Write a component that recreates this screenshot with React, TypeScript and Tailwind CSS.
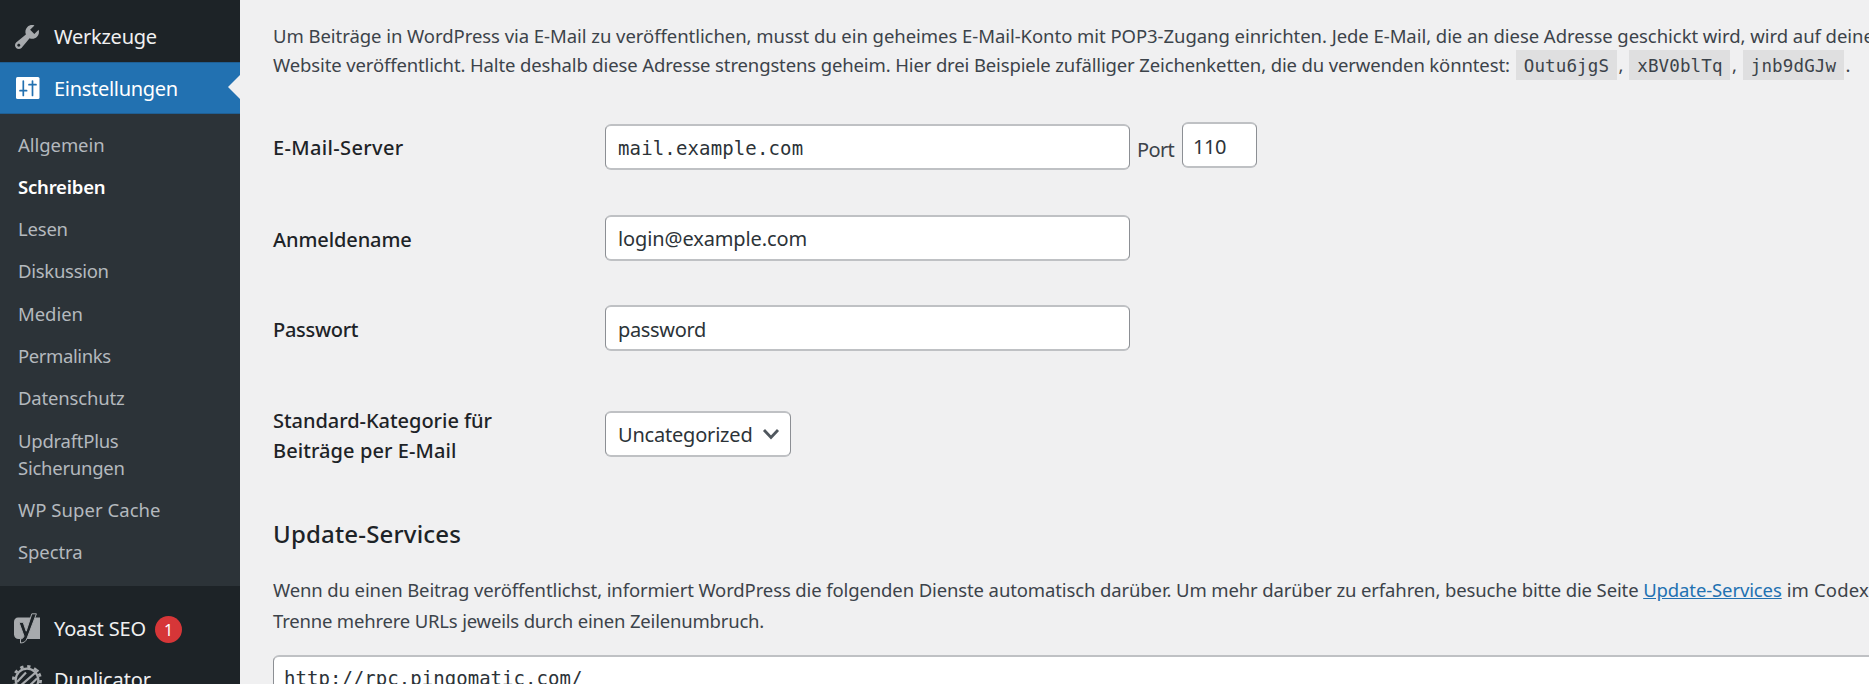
import React, { useState } from 'react';

const SUBMENU_ITEMS = [
  { label: 'Allgemein', tracking: 'tracking-[-0.06px]' },
  { label: 'Schreiben', tracking: 'tracking-[-0.2px]' },
  { label: 'Lesen', tracking: 'tracking-[-0.2px]' },
  { label: 'Diskussion', tracking: 'tracking-[-0.28px]' },
  { label: 'Medien', tracking: 'tracking-[-0.05px]' },
  { label: 'Permalinks', tracking: 'tracking-[-0.4px]' },
  { label: 'Datenschutz', tracking: 'tracking-[-0.17px]' },
  { label: 'UpdraftPlus Sicherungen', tracking: 'tracking-[-0.25px]' },
  { label: 'WP Super Cache', tracking: 'tracking-[0.05px]' },
  { label: 'Spectra', tracking: 'tracking-[-0.1px]' },
];

const FIELD = "h-[46px] rounded-[6px] border-x border-y-2 border-x-[#8c8f94] border-y-[#bfc1c4] bg-white text-[#2c3338] outline-none";

const ToolsIcon = () => (
  <svg className="ml-[12px] w-[30px] h-[30px] shrink-0" viewBox="0 0 20 20" fill="#a7aaad">
    <path d="M16.68 9.77c-1.34 1.34-3.3 1.67-4.95.99l-5.41 6.52c-.99.99-2.59.99-3.58 0s-.99-2.59 0-3.57l6.52-5.42c-.68-1.65-.35-3.61.99-4.95 1.28-1.28 3.12-1.62 4.72-1.06l-2.89 2.89 2.82 2.82 2.86-2.87c.53 1.58.18 3.39-1.08 4.65zM3.81 16.21c.4.39 1.04.39 1.43 0 .4-.4.4-1.04 0-1.43-.39-.4-1.03-.4-1.43 0-.39.39-.39 1.03 0 1.43z" />
  </svg>
);

const SettingsIcon = () => (
  <svg className="ml-[13px] mb-px w-[30px] h-[30px] shrink-0" viewBox="0 0 30 30" fill="none">
    <rect x="3" y="4" width="23.5" height="22" rx="1.5" fill="#fff" />
    <path d="M10.3 8v14.5M7 17.7h6.6M19.5 8v14.5M16 11.7h7" stroke="#2271b1" strokeWidth="1.7" strokeLinecap="round" />
  </svg>
);

const YoastIcon = () => (
  <svg className="ml-[12px] w-[30px] h-[34px] shrink-0" viewBox="0 0 30 34">
    <path d="M6 5.500h22V27H6.500C4 27 2 25 2 22.500V9.500c0-2.200 1.800-4 4-4z" fill="#a7aaad" />
    <path d="M19.800 1.800h4.600L15.200 26c-1.300 3.400-3 4.900-6.700 5v-4c2.300-.3 3-1.500 3.500-2.900l-5-13.800h4.200l3 8.900z" fill="#1d2327" stroke="#a7aaad" strokeWidth="1" />
  </svg>
);

const DuplicatorIcon = () => (
  <svg className="ml-[11px] w-[32px] h-[32px] shrink-0" viewBox="0 0 32 32" fill="none" stroke="#a7aaad">
    <circle cx="16" cy="16" r="13.600" strokeWidth="2.800" strokeDasharray="3.300 3.800" />
    <circle cx="16" cy="16" r="11.300" strokeWidth="2.200" />
    <path d="M6 18L15 8.500M8.500 22.500L27.500 6M14 26L26 14.500" strokeWidth="2.200" />
  </svg>
);

interface MenuRowProps {
  icon: React.ReactNode;
  label: string;
  className?: string;
  children?: React.ReactNode;
}

const MenuRow = ({ icon, label, className = '', children }: MenuRowProps) => (
  <a href="#" className={`flex items-center text-[20px] ${className}`}>
    <span className="flex w-[54px] shrink-0 items-center">{icon}</span>
    <span>{label}</span>
    {children}
  </a>
);

const Sidebar = () => {
  const [current, setCurrent] = useState('Schreiben');

  return (
    <nav className="w-[240px] shrink-0 bg-[#1d2327] pt-[11px] text-[#f0f0f1]">
      <MenuRow icon={<ToolsIcon />} label="Werkzeuge" className="h-[51px] tracking-[-0.24px]" />
      <div className="relative border-y border-[#1f5f94] bg-[#2271b1] text-white">
        <MenuRow icon={<SettingsIcon />} label="Einstellungen" className="h-[50px] pt-px tracking-[-0.3px]" />
        {/* Arrow pointing at the active page */}
        <span className="absolute right-0 top-[12px] h-0 w-0 border-y-[12px] border-r-[12px] border-y-transparent border-r-[#f0f0f1]"></span>
      </div>
      <ul className="bg-[#2c3338] pb-[13px] pt-[9px]">
        {SUBMENU_ITEMS.map((item) => (
          <li key={item.label} className="py-[7.5px] pl-[18px] pr-[60px] text-[18.5px] leading-[27.3px]">
            <a
              href="#"
              onClick={() => setCurrent(item.label)}
              className={`${item.tracking} ${item.label === current ? 'font-semibold text-white' : 'text-[#b4b9be]'}`}
            >
              {item.label}
            </a>
          </li>
        ))}
      </ul>
      <div className="pt-[17px]">
        <MenuRow icon={<YoastIcon />} label="Yoast SEO" className="h-[51px] tracking-[-0.16px]">
          <span className="ml-[9px] mt-[2px] flex h-[27px] w-[27px] items-center justify-center rounded-full bg-[#d63638] text-[16px] text-white">1</span>
        </MenuRow>
        <MenuRow icon={<DuplicatorIcon />} label="Duplicator" className="h-[51px] tracking-[-0.1px]" />
      </div>
    </nav>
  );
};

const Code = ({ children }: { children: React.ReactNode }) => (
  <code className="mx-[1.5px] inline-block h-[30px] w-[101px] bg-[#dfdfe0] text-center align-top font-['DejaVu_Sans_Mono',monospace] text-[17.5px] leading-[32px] tracking-[0.14px]">
    {children}
  </code>
);

const Label = ({ children, className = '' }: { children: React.ReactNode; className?: string }) => (
  <label className={`block w-[332px] shrink-0 text-[20px] font-medium leading-[30px] text-[#1d2327] ${className}`}>{children}</label>
);

const App = () => {
  return (
    <div className="h-[693px] overflow-hidden bg-white">
      <div className="flex h-[684px] overflow-hidden bg-[#f0f0f1] font-['Noto_Sans','Open_Sans',sans-serif] text-[#3c434a]">
        <Sidebar />

        <main className="w-[1629px] shrink-0 overflow-hidden pl-[33px] pt-[21px]">
          <div className="h-[58px] whitespace-nowrap text-[18.5px] leading-[29px]">
            <p className="tracking-[-0.05px]">
              Um Beiträge in WordPress via E-Mail zu veröffentlichen, musst du ein geheimes E-Mail-Konto mit POP3-Zugang einrichten. Jede E-Mail, die an diese Adresse geschickt wird, wird auf deine
            </p>
            <p className="tracking-[-0.13px]">
              Website veröffentlicht. Halte deshalb diese Adresse strengstens geheim. Hier drei Beispiele zufälliger Zeichenketten, die du verwenden könntest: <Code>Outu6jgS</Code>, <Code>xBV0blTq</Code>, <Code>jnb9dGJw</Code>.
            </p>
          </div>

          <form onSubmit={(e) => e.preventDefault()}>
            <div className="mt-[43px] flex h-[93px] items-start">
              <Label className="mt-[11px] tracking-[0.35px]">E-Mail-Server</Label>
              <input type="text" defaultValue="mail.example.com" className={`${FIELD} mt-[2px] w-[525px] pl-[12px] pt-[2px] font-['DejaVu_Sans_Mono',monospace] text-[19px] tracking-[0.14px]`} />
              <span className="ml-[7px] mt-[13px] w-[45px] text-[20px] leading-[30px] tracking-[-0.65px]">Port</span>
              <input type="text" defaultValue="110" className={`${FIELD} w-[75px] pl-[10px] pt-[2px] text-[20px] tracking-[-0.44px]`} />
            </div>

            <div className="flex h-[90px] items-start">
              <Label className="mt-[10px] tracking-[-0.1px]">Anmeldename</Label>
              <input type="text" defaultValue="login@example.com" className={`${FIELD} w-[525px] pl-[12px] text-[20px] tracking-[-0.11px]`} />
            </div>

            <div className="flex h-[101px] items-start">
              <Label className="mt-[10px] tracking-[-0.3px]">Passwort</Label>
              <input type="text" defaultValue="password" className={`${FIELD} w-[525px] pl-[12px] pt-[2px] text-[20px] tracking-[-0.33px]`} />
            </div>

            <div className="flex h-[110px] items-start">
              <Label>
                <span className="tracking-[-0.04px]">Standard-Kategorie für</span>
                <br />
                <span className="tracking-[0.08px]">Beiträge per E-Mail</span>
              </Label>
              <button type="button" className={`${FIELD} mt-[5px] flex w-[186px] items-center pl-[12px] pt-[2px] text-[20px] tracking-[-0.2px]`}>
                Uncategorized
                <svg className="mb-[2px] ml-[9px] h-[12px] w-[18px]" viewBox="0 0 18 12" fill="none" stroke="#50575e" strokeWidth="2.800">
                  <path d="M2 2l7 7.500L16 2" />
                </svg>
              </button>
            </div>

            <h2 className="text-[24px] font-medium leading-[36px] tracking-[0.18px] text-[#1d2327]">Update-Services</h2>

            <div className="mt-[22px] whitespace-nowrap text-[18.5px] leading-[31px]">
              <p className="tracking-[-0.12px]">
                Wenn du einen Beitrag veröffentlichst, informiert WordPress die folgenden Dienste automatisch darüber. Um mehr darüber zu erfahren, besuche bitte die Seite{' '}
                <a href="#" className="text-[#2271b1] underline">Update-Services</a>
                <span className="tracking-[0.15px]"> im Codex</span>
              </p>
              <p className="tracking-[-0.19px]">Trenne mehrere URLs jeweils durch einen Zeilenumbruch.</p>
            </div>

            <textarea
              defaultValue="http://rpc.pingomatic.com/"
              className="mt-[19px] block h-[120px] w-[1700px] resize-none rounded-[6px] border-x border-y-2 border-x-[#8c8f94] border-y-[#bfc1c4] bg-white pl-[10px] pt-[6px] font-['DejaVu_Sans_Mono',monospace] text-[19px] leading-[30px] tracking-[0.04px] text-[#2c3338] outline-none"
            />
          </form>
        </main>
      </div>
    </div>
  );
};

export default App;
